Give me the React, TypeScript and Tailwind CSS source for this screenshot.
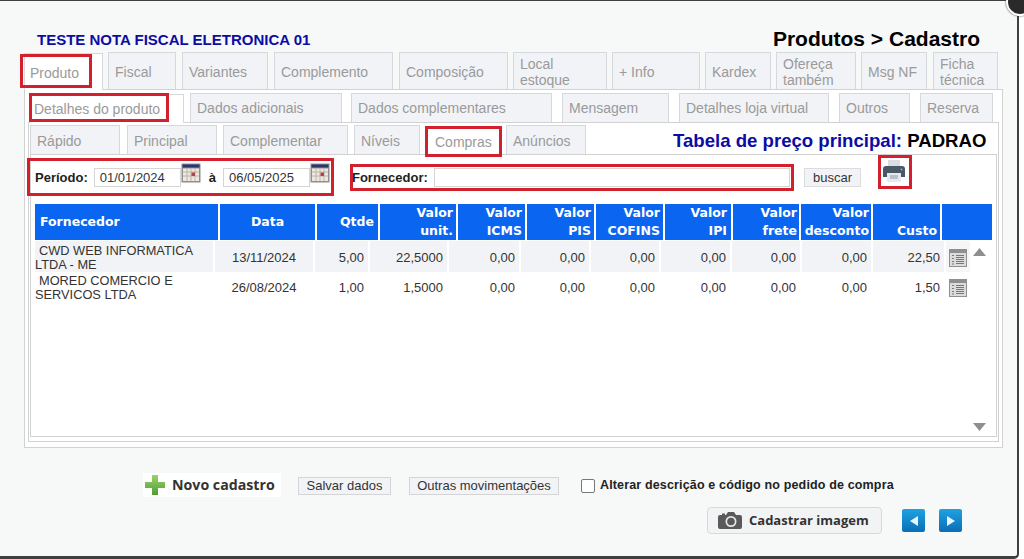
const topTabs = [
  { label: "Fiscal", cls: "w-[68px] ml-[5px]" },
  { label: "Variantes", cls: "w-[86px] ml-[6px]" },
  { label: "Complemento", cls: "w-[119px] ml-[6px]" },
  { label: "Composição", cls: "w-[109px] ml-[6px]" },
  { label: "Local estoque", cls: "w-[94px] ml-[5px]" },
  { label: "+ Info", cls: "w-[88px] ml-[5px]" },
  { label: "Kardex", cls: "w-[66px] ml-[5px]" },
  { label: "Ofereça também", cls: "w-[80px] ml-[5px]" },
  { label: "Msg NF", cls: "w-[66px] ml-[5px]" },
  { label: "Ficha técnica", cls: "w-[65px] ml-[6px]" },
];

const midTabs = [
  { label: "Dados adicionais", cls: "w-[152px] ml-[6px]" },
  { label: "Dados complementares", cls: "w-[201px] ml-[9px]" },
  { label: "Mensagem", cls: "w-[107px] ml-[10px]" },
  { label: "Detalhes loja virtual", cls: "w-[150px] ml-[10px]" },
  { label: "Outros", cls: "w-[71px] ml-[10px]" },
  { label: "Reserva", cls: "w-[73px] ml-[10px]" },
];

const subTabs = [
  { label: "Rápido", cls: "w-[90px]" },
  { label: "Principal", cls: "w-[90px] ml-[7px]" },
  { label: "Complementar", cls: "w-[125px] ml-[6px]" },
  { label: "Níveis", cls: "w-[66px] ml-[6px]" },
];

const headers = [
  { lines: ["Fornecedor"], cls: "items-center justify-start pl-[5px]" },
  { lines: ["Data"], cls: "items-center justify-center" },
  { lines: ["Qtde"], cls: "items-center justify-end pr-[4px]" },
  { lines: ["Valor", "unit."], cls: "items-center justify-end pr-[3px]" },
  { lines: ["Valor", "ICMS"], cls: "items-center justify-end pr-[3px]" },
  { lines: ["Valor", "PIS"], cls: "items-center justify-end pr-[3px]" },
  { lines: ["Valor", "COFINS"], cls: "items-center justify-end pr-[3px]" },
  { lines: ["Valor", "IPI"], cls: "items-center justify-end pr-[4px]" },
  { lines: ["Valor", "frete"], cls: "items-center justify-end pr-[2px]" },
  { lines: ["Valor", "desconto"], cls: "items-center justify-end pr-[2px]" },
  { lines: ["Custo"], cls: "items-end justify-end pr-[3px]" },
  { lines: [], cls: "" },
];

const rows = [
  {
    nome: "CWD WEB INFORMATICA LTDA - ME",
    data: "13/11/2024",
    valores: ["5,00", "22,5000", "0,00", "0,00", "0,00", "0,00", "0,00", "0,00", "22,50"],
    shaded: true,
  },
  {
    nome: "MORED COMERCIO E SERVICOS LTDA",
    data: "26/08/2024",
    valores: ["1,00", "1,5000", "0,00", "0,00", "0,00", "0,00", "0,00", "0,00", "1,50"],
    shaded: false,
  },
];

function Tab({ label, cls = "", active = false }: { label: string; cls?: string; active?: boolean }) {
  return (
    <div
      className={`flex items-center px-[6px] text-[14px] leading-[16px] text-[#9a9a9a] border border-b-0 border-[#d5d9dd] ${
        active ? "bg-white" : "bg-[#f1f3f7]"
      } ${cls}`}
    >
      <span>{label}</span>
    </div>
  );
}

function CalendarIcon() {
  return (
    <svg width="20" height="20" viewBox="0 0 20 20" className="shrink-0">
      <rect x="0.5" y="0.5" width="19" height="19" fill="#8f8f8f" />
      <rect x="1.5" y="1.5" width="17" height="3" fill="#2a3470" />
      <rect x="2" y="5.5" width="16" height="12.5" fill="#efe9dd" />
      <path d="M2 9h16M2 13h16M6 5.5v12.5M10 5.5v12.5M14 5.5v12.5" stroke="#b9b4ad" strokeWidth="1" />
      <rect x="10.5" y="9.5" width="3.5" height="3.5" fill="#b0444a" />
    </svg>
  );
}

function PrinterIcon() {
  return (
    <svg width="24" height="24" viewBox="0 0 24 24" className="shrink-0">
      <path d="M6 1h12v7H6z" fill="#d9dde3" />
      <path d="M4 7h16a3 3 0 0 1 3 3v8h-4v-3H5v3H1v-8a3 3 0 0 1 3-3z" fill="#4a5866" />
      <path d="M5 14h14v9H5z" fill="#e6e9ed" />
      <path d="M8 17h8M8 19h8" stroke="#8a96a3" strokeWidth="1" />
      <circle cx="19.5" cy="10.5" r="0.9" fill="#9fb0bf" />
    </svg>
  );
}

function ListIcon() {
  return (
    <svg width="18" height="18" viewBox="0 0 18 18">
      <rect width="18" height="18" fill="#8f8f8f" />
      <rect x="1" y="4" width="16" height="13" fill="#dcdcdc" />
      <path d="M3 6.5h2M3 9.5h2M3 12.5h2M3 15h2M7 6.5h8M7 8.5h8M7 10.5h8M7 12.5h8M7 14.5h8" stroke="#777" strokeWidth="1" />
    </svg>
  );
}

function PlusIcon() {
  return (
    <svg width="22" height="22" viewBox="0 0 22 22" className="shrink-0">
      <defs>
        <linearGradient id="plusGreen" x1="0" y1="0" x2="0" y2="1">
          <stop offset="0" stopColor="#9bd46a" />
          <stop offset="1" stopColor="#4f9c35" />
        </linearGradient>
      </defs>
      <path d="M8 1h6v7h7v6h-7v7H8v-7H1V8h7z" fill="url(#plusGreen)" />
    </svg>
  );
}

function CameraIcon() {
  return (
    <svg width="24" height="19" viewBox="0 0 24 19" className="shrink-0">
      <path d="M2 4h2V2.5h3V4h1l2-3h6l2 3h4a2 2 0 0 1 2 2v10a2 2 0 0 1-2 2H2a2 2 0 0 1-2-2V6a2 2 0 0 1 2-2z" fill="#5a5a5a" />
      <circle cx="13" cy="10.5" r="5.5" fill="#e8e8e8" />
      <circle cx="13" cy="10.5" r="3.8" fill="#5a5a5a" />
    </svg>
  );
}

function NavButton({ dir }: { dir: "left" | "right" }) {
  return (
    <div className="w-[23px] h-[23px] rounded-[2px] bg-gradient-to-b from-[#1fa3e2] to-[#0b6db5] flex items-center justify-center">
      <svg width="8" height="10" viewBox="0 0 8 10">
        <path d={dir === "left" ? "M8 0v10L0 5z" : "M0 0v10l8-5z"} fill="#e8f5fd" />
      </svg>
    </div>
  );
}

function RedBox({ cls }: { cls: string }) {
  return <div className={`absolute border-[3px] border-[#d2202c] pointer-events-none ${cls}`} />;
}

export default function App() {
  return (
    <div className="relative w-[1024px] h-[559px] overflow-hidden bg-white font-['Liberation_Sans',Arial,sans-serif]">
      <div className="w-[1019px] h-[559px] bg-[#f7f8f8] border-t border-r-2 border-b-[3px] border-[#3f3f3f] rounded-br-[5px]">
        {/* titulo */}
        <div className="flex items-end justify-between h-[51px] pl-[37px] pr-[37px]">
          <span className="mb-[4px] text-[15px] leading-[16px] font-bold text-[#0c0ca5]">TESTE NOTA FISCAL ELETRONICA 01</span>
          <span className="mb-[1px] text-[21px] leading-[24px] font-bold text-black">Produtos &gt; Cadastro</span>
        </div>

        {/* abas principais */}
        <div className="flex h-[37px] ml-[24px]">
          <Tab label="Produto" cls="w-[79px] !px-[5px] pt-[2px] relative top-[1px]" active />
          {topTabs.map((t) => (
            <Tab key={t.label} label={t.label} cls={`${t.cls} pt-[2px]`} />
          ))}
        </div>

        <div className="ml-[24px] w-[979px] h-[359px] bg-white border border-[#d2d2d2] pt-[3px] pl-[4px]">
          <div className="flex h-[29px]">
            <Tab label="Detalhes do produto" cls="w-[155px] !px-[4px] relative top-[1px]" active />
            {midTabs.map((t) => (
              <Tab key={t.label} label={t.label} cls={t.cls} />
            ))}
          </div>

          <div className="-ml-[1px] w-[971px] h-[320px] border border-[#d2d2d2] pt-[2px] pl-[1px]">
            <div className="flex h-[29px]">
              {subTabs.map((t) => (
                <Tab key={t.label} label={t.label} cls={`${t.cls} pt-[2px]`} />
              ))}
              <Tab label="Compras" cls="w-[74px] ml-[6px] !px-[8px] pt-[2px] relative top-[1px]" active />
              <Tab label="Anúncios" cls="w-[80px] ml-[6px] pt-[2px]" />
              <div className="ml-[87px] text-[18.6px] leading-[22px] pt-[5px] font-bold whitespace-nowrap">
                <span className="text-[#0c0ca5]">Tabela de preço principal:</span>
                <span className="text-black"> PADRAO</span>
              </div>
            </div>

            <div className="w-[967px] h-[283px] border border-[#d2d2d2] pl-[4px]">
              {/* filtros */}
              <div className="flex items-start h-[49px]">
                <span className="mt-[15px] text-[13px] leading-[16px] font-bold text-[#222]">Período:</span>
                <div className="mt-[13px] ml-[6px] w-[87px] h-[19px] border border-[#d5d5d5] pl-[5px] text-[13px] leading-[17px] text-[#333]">01/01/2024</div>
                <div className="mt-[8px]">
                  <CalendarIcon />
                </div>
                <span className="mt-[15px] ml-[8px] text-[13px] leading-[16px] font-bold text-[#222]">à</span>
                <div className="mt-[13px] ml-[7px] w-[87px] h-[19px] border border-[#d5d5d5] pl-[5px] text-[13px] leading-[17px] text-[#333]">06/05/2025</div>
                <div className="mt-[8px]">
                  <CalendarIcon />
                </div>
                <span className="mt-[15px] ml-[22px] w-[82px] text-[13px] leading-[16px] font-bold text-[#222]">Fornecedor:</span>
                <div className="mt-[13px] w-[356px] h-[19px] border border-[#d5d5d5]" />
                <div className="mt-[13px] ml-[14px] w-[57px] h-[19px] bg-[#f1f3f7] border border-[#dcdcdc] text-center text-[13px] leading-[17px] text-[#333]">buscar</div>
                <div className="mt-[4px] ml-[21px]">
                  <PrinterIcon />
                </div>
              </div>

              {/* tabela */}
              <div className="w-[957px] h-[36px] grid grid-cols-[183px_95px_61px_76px_67px_67px_67px_66px_66px_70px_67px_50px] gap-x-[2px]">
                {headers.map((h, i) => (
                  <div
                    key={i}
                    className={`flex bg-[#0a66f0] text-white text-right text-[12.5px] leading-[18px] font-bold font-['DejaVu_Sans',sans-serif] ${h.cls}`}
                  >
                    <div>
                      {h.lines.map((l) => (
                        <div key={l}>{l}</div>
                      ))}
                    </div>
                  </div>
                ))}
              </div>
              <div className="flex w-[957px] h-[197px] pt-[1px]">
                <div className="flex flex-col w-[935px]">
                  {rows.map((r) => (
                    <div
                      key={r.nome}
                      className="h-[30px] grid grid-cols-[178px_98px_53px_77px_70px_68px_68px_69px_68px_69px_71px_24px] gap-x-[2px] text-[13px] leading-[14px] text-[#333]"
                    >
                      <div className={`pt-[3px] indent-[4px] text-[12.8px] ${r.shaded ? "bg-[#f1f3f6]" : ""}`}>{r.nome}</div>
                      <div className={`flex items-center justify-center pt-[3px] ${r.shaded ? "bg-[#f1f3f6]" : ""}`}>{r.data}</div>
                      {r.valores.map((v, i) => (
                        <div key={i} className={`flex items-center justify-end pr-[4px] pt-[3px] ${r.shaded ? "bg-[#f1f3f6]" : ""}`}>
                          {v}
                        </div>
                      ))}
                      <div className={`flex items-center justify-center pt-[3px] ${r.shaded ? "bg-[#f5f6f8]" : ""}`}>
                        <ListIcon />
                      </div>
                    </div>
                  ))}
                </div>
                <div className="flex flex-col justify-between w-[20px] pl-[3px] pt-[7px] pb-[6px]">
                  <svg width="13" height="8" viewBox="0 0 13 8">
                    <path d="M6.5 0L13 8H0z" fill="#8f8f8f" />
                  </svg>
                  <svg width="13" height="8" viewBox="0 0 13 8">
                    <path d="M0 0h13L6.5 8z" fill="#8f8f8f" />
                  </svg>
                </div>
              </div>
            </div>
          </div>
        </div>

        {/* rodape */}
        <div className="flex items-center h-[24px] mt-[25px] ml-[143px]">
          <div className="flex items-center gap-[6px] w-[138px] h-[24px] bg-white pl-[1px]">
            <PlusIcon />
            <span className="text-[14.2px] font-bold text-[#333] font-['Open_Sans',sans-serif]">Novo cadastro</span>
          </div>
          <div className="ml-[17px] mt-[1px] w-[93px] h-[18px] bg-[#f1f3f7] border border-[#d5d5d5] text-center text-[13px] leading-[16px] text-[#333]">Salvar dados</div>
          <div className="ml-[18px] mt-[1px] w-[150px] h-[18px] bg-[#f1f3f7] border border-[#d5d5d5] text-center text-[13px] leading-[16px] text-[#333]">Outras movimentações</div>
          <div className="ml-[22px] mt-[1px] w-[14px] h-[14px] bg-white border border-[#777] rounded-[2px]" />
          <span className="ml-[5px] mt-[1px] text-[12.5px] font-bold text-[#222] tracking-[0.15px]">Alterar descrição e código no pedido de compra</span>
        </div>
        <div className="flex items-center mt-[10px] ml-[707px]">
          <div className="flex items-center gap-[7px] w-[175px] h-[27px] pl-[10px] bg-[#f1f3f5] border border-[#d8d8d8] rounded-[4px]">
            <CameraIcon />
            <span className="text-[13px] font-bold text-[#333] font-['Open_Sans',sans-serif]">Cadastrar imagem</span>
          </div>
          <div className="ml-[20px]">
            <NavButton dir="left" />
          </div>
          <div className="ml-[14px]">
            <NavButton dir="right" />
          </div>
        </div>
      </div>

      {/* botao fechar */}
      <div className="absolute -top-[12px] left-[1006px] w-[28px] h-[28px] rounded-full bg-[#2a2a2a] border-[2px] border-white shadow-[0_0_2px_#333]" />

      {/* marcacoes vermelhas */}
      <RedBox cls="left-[20px] top-[54px] w-[72px] h-[34px]" />
      <RedBox cls="left-[29px] top-[93px] w-[140px] h-[29px]" />
      <RedBox cls="left-[425px] top-[126px] w-[77px] h-[31px]" />
      <RedBox cls="left-[27px] top-[158px] w-[307px] h-[38px]" />
      <RedBox cls="left-[350px] top-[164px] w-[444px] h-[27px]" />
      <RedBox cls="left-[878px] top-[155px] w-[34px] h-[34px]" />
    </div>
  );
}
